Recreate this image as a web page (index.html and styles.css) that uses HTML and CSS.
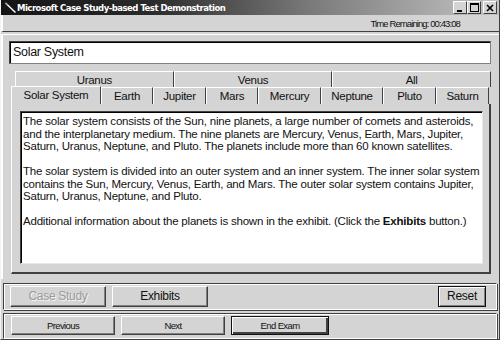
FILE: index.html
```html
<!DOCTYPE html>
<html lang="en">
<head>
    <meta charset="UTF-8">
    <title>Microsoft Case Study-based Test Demonstration</title>
    <link rel="stylesheet" href="styles.css">
</head>
<body>
    <div class="window">
        <div class="titlebar">
            <svg class="app-icon" width="11" height="11" viewBox="0 0 11 11">
                <line x1="0.5" y1="1" x2="10.5" y2="10.5" stroke="#ffffff" stroke-width="1.4"/>
                <line x1="0.5" y1="1" x2="2.5" y2="3" stroke="#999999" stroke-width="1.4"/>
            </svg>
            <span class="title">Microsoft Case Study-based Test Demonstration</span>
            <div class="winbtns">
                <span class="winbtn">
                    <svg width="8" height="8" viewBox="0 0 8 8"><rect x="1" y="6" width="5" height="2" fill="#000"/></svg>
                </span>
                <span class="winbtn">
                    <svg width="9" height="9" viewBox="0 0 9 9"><rect x="0.5" y="0.5" width="8" height="8" fill="none" stroke="#000"/><rect x="0" y="0" width="9" height="2" fill="#000"/></svg>
                </span>
                <span class="winbtn close">
                    <svg width="8" height="8" viewBox="0 0 8 8"><path d="M1 1 L7 7 M7 1 L1 7" stroke="#000" stroke-width="1.6"/></svg>
                </span>
            </div>
        </div>

        <div class="statusbar">
            <span class="timer">Time Remaining: 00:43:08</span>
        </div>

        <div class="main">
            <div class="topic">Solar System</div>

            <div class="tabs">
                <div class="tabrow top">
                    <span class="tab">Uranus</span>
                    <span class="tab">Venus</span>
                    <span class="tab">All</span>
                </div>
                <div class="tabrow bottom">
                    <span class="tab active w-solar">Solar System</span>
                    <span class="tab w-earth">Earth</span>
                    <span class="tab w-jupiter">Jupiter</span>
                    <span class="tab w-mars">Mars</span>
                    <span class="tab w-mercury">Mercury</span>
                    <span class="tab w-neptune">Neptune</span>
                    <span class="tab w-pluto">Pluto</span>
                    <span class="tab w-saturn">Saturn</span>
                </div>
            </div>

            <div class="panel">
                <div class="content">
                    <p>The solar system consists of the Sun, nine planets, a large number of comets and asteroids, and the interplanetary medium. The nine planets are Mercury, Venus, Earth, Mars, Jupiter, Saturn, Uranus, Neptune, and Pluto. The planets include more than 60 known satellites.</p>
                    <p>The solar system is divided into an outer system and an inner system. The inner solar system contains the Sun, Mercury, Venus, Earth, and Mars. The outer solar system contains Jupiter, Saturn, Uranus, Neptune, and Pluto.</p>
                    <p>Additional information about the planets is shown in the exhibit. (Click the <b>Exhibits</b> button.)</p>
                </div>
            </div>
        </div>

        <div class="group actions">
            <button class="btn disabled">Case Study</button>
            <button class="btn">Exhibits</button>
            <button class="btn reset">Reset</button>
        </div>

        <div class="group nav">
            <button class="btn small">Previous</button>
            <button class="btn small">Next</button>
            <button class="btn small focus">End Exam</button>
        </div>
    </div>
</body>
</html>
```

FILE: styles.css
```css
body{
    margin: 0;
    background: #d4d4d4;
    font-family: "Liberation Sans", Arial, sans-serif;
}

.window{
    width: 500px;
    height: 340px;
    box-sizing: border-box;
    background-color: #d4d4d4;
    border-left: 1px solid #f2f2f2;
    border-right: 1px solid #404040;
    border-bottom: 1px solid #404040;
    display: flex;
    flex-direction: column;
}

.titlebar{
    height: 15px;
    background: linear-gradient(90deg, #141414, #2a2a2a 30%, #7a7a7a 62%, #c4c4c4);
    display: flex;
    align-items: center;
    padding: 0 2px 0 4px;
    flex-shrink: 0;
}

.app-icon{
    margin-right: 1px;
}

.title{
    color: #ffffff;
    font-family: "DejaVu Sans", Verdana, sans-serif;
    font-weight: bold;
    font-size: 8.5px;
    letter-spacing: -0.5px;
    flex: 1;
}

.winbtns{
    display: flex;
}

.winbtn{
    width: 12px;
    height: 11px;
    background-color: #d4d4d4;
    border: 1px solid;
    border-color: #ffffff #404040 #404040 #ffffff;
    display: flex;
    align-items: center;
    justify-content: center;
}

.winbtn.close{
    margin-left: 2px;
}

.statusbar{
    height: 16px;
    display: flex;
    justify-content: flex-end;
    align-items: center;
    padding: 0 39px 0 0;
    border-left: 2px solid #ffffff;
    border-bottom: 1px solid #404040;
    flex-shrink: 0;
}

.timer{
    font-size: 9.5px;
    letter-spacing: -0.9px;
    color: #111111;
}

.main{
    margin: 2px 0 0 0;
    border-top: 1px solid #ffffff;
    border-left: 2px solid #ffffff;
    padding: 6px 8px 5px 6px;
    display: flex;
    flex-direction: column;
}

.topic{
    height: 21px;
    background-color: #ffffff;
    border: 1px solid;
    border-color: #404040 #808080 #808080 #404040;
    box-shadow: inset 1px 1px 0 #000000;
    font-size: 12.5px;
    letter-spacing: -0.3px;
    line-height: 21px;
    padding-left: 3px;
    color: #111111;
}

.tabs{
    margin-top: 7px;
}

.tabrow{
    display: flex;
    height: 16px;
}

.tabrow.top{
    margin-left: 6px;
}

.tabrow.bottom{
    margin-left: 2px;
    height: 17px;
}

.tab{
    flex: 1;
    font-size: 11.5px;
    letter-spacing: -0.3px;
    line-height: 16px;
    text-align: center;
    color: #111111;
    border-top: 1px solid #ffffff;
    border-left: 1px solid #ffffff;
    border-right: 1px solid #404040;
    box-sizing: border-box;
}

.tab.active{
    height: 18px;
    margin-top: -1px;
}

.w-solar{ flex: 0 0 90px; }
.w-earth{ flex: 0 0 52px; }
.w-jupiter{ flex: 0 0 53px; }
.w-mars{ flex: 0 0 52px; }
.w-mercury{ flex: 0 0 63px; }
.w-neptune{ flex: 0 0 62px; }
.w-pluto{ flex: 0 0 53px; }
.w-saturn{ flex: 0 0 53px; }

.panel{
    height: 170px;
    box-sizing: border-box;
    border-left: 1px solid #ffffff;
    border-right: 2px solid #404040;
    border-bottom: 2px solid #404040;
    margin-left: 2px;
    padding: 7px 6px 8px 8px;
}

.content{
    height: 100%;
    box-sizing: border-box;
    background-color: #ffffff;
    border: 1px solid;
    border-color: #404040 #e8e8e8 #e8e8e8 #404040;
    box-shadow: inset 1px 1px 0 #000000;
    padding: 3px 2px 0 2px;
    font-size: 11.5px;
    letter-spacing: -0.2px;
    line-height: 12.5px;
    color: #111111;
}

.content p{
    margin: 0 0 12.5px 0;
}

.group{
    display: flex;
    align-items: center;
    gap: 6px;
    border: 1px solid;
    border-color: #404040 #ffffff #ffffff #404040;
    box-shadow: inset 1px 1px 0 #ffffff, 1px 1px 0 #404040;
    margin: 0 2px;
    padding: 0 6px;
}

.actions{
    height: 29px;
    margin-top: 4px;
    box-sizing: border-box;
}

.nav{
    height: 28px;
    margin-top: 3px;
    box-sizing: border-box;
    padding: 0 7px;
}

.btn{
    height: 21px;
    padding: 0;
    background-color: #d4d4d4;
    border: 1px solid;
    border-color: #ffffff #404040 #404040 #ffffff;
    box-shadow: inset -1px -1px 0 #808080;
    font-family: "Liberation Sans", Arial, sans-serif;
    font-size: 12px;
    letter-spacing: -0.3px;
    color: #111111;
    width: 96px;
}

.btn.disabled{
    color: #9a9a9a;
    text-shadow: 1px 1px 0 #f4f4f4;
}

.btn.reset{
    width: 48px;
    margin-left: auto;
    margin-right: 4px;
    border: 1px solid #111111;
    box-shadow: inset 1px 1px 0 #ffffff, inset -1px -1px 0 #808080;
}

.btn.small{
    width: 104px;
    height: 19px;
    font-size: 9.5px;
    letter-spacing: -0.6px;
}

.btn.focus{
    width: 98px;
    border: 1px solid #111111;
    box-shadow: inset 1px 1px 0 #ffffff, inset -2px -2px 0 #404040;
}
```
